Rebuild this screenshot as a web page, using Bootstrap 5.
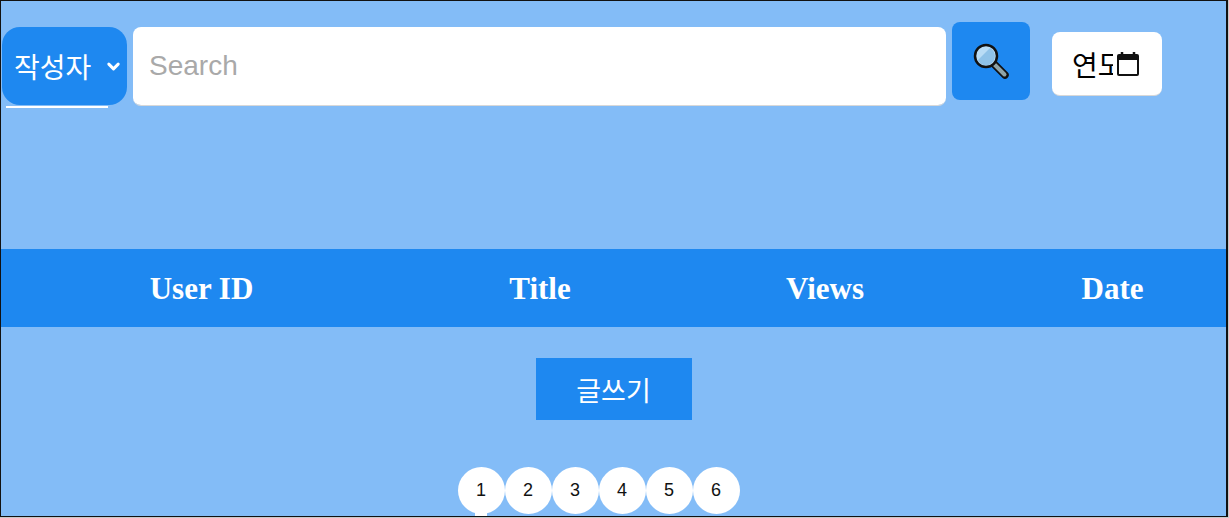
<!DOCTYPE html>
<html lang="ko">

<head>
    <meta charset="UTF-8">
    <meta name="viewport" content="width=device-width, initial-scale=1.0">
    <title>Board</title>
    <link href="https://cdn.jsdelivr.net/npm/bootstrap@5.3.0/dist/css/bootstrap.min.css" rel="stylesheet">
    <style>
        html, body { height: 100%; overflow: hidden; }
        body { background: #c9c9c9; font-family: "Liberation Sans", "Noto Sans CJK KR", sans-serif; }
        .board-frame {
            width: 1228px;
            height: 517px;
            background: #83bcf7;
            border: 1px solid #111;
            border-right-width: 2px;
            overflow: hidden;
        }
        .search-bar { height: 248px; padding: 21px 0 0 1px; }
        .author-wrap { width: 125px; margin-top: 5px; margin-right: 6px; }
        .author-select {
            height: 78px;
            padding: 0 0 0 12px;
            border: 0;
            border-radius: 18px;
            color: #fff;
            font-family: "Noto Sans CJK KR", sans-serif;
            font-size: 28px;
            background-color: #1e88f0;
            background-position: right 6px center;
            background-size: 15px 15px;
            background-image: url("data:image/svg+xml,%3csvg xmlns='http://www.w3.org/2000/svg' viewBox='0 0 16 16'%3e%3cpath fill='none' stroke='%23fff' stroke-linecap='round' stroke-linejoin='round' stroke-width='3.2' d='m3 5.500 5 5 5-5'/%3e%3c/svg%3e");
        }
        .author-line { height: 2px; margin: 1px 19px 0 4px; background: #fff; }
        .search-input {
            width: 813px;
            height: 79px;
            margin-top: 5px;
            padding: 0 16px;
            border: 0;
            border-bottom: 1px solid #d8d8d8;
            border-radius: 8px;
            font-size: 28px;
        }
        .search-input::placeholder { color: #a9a9a9; }
        .search-btn {
            width: 78px;
            height: 78px;
            margin-left: 6px;
            padding: 0;
            border: 0;
            border-radius: 8px;
            background: #1e88f0;
        }
        .date-box {
            width: 110px;
            height: 64px;
            margin-top: 10px;
            margin-left: 22px;
            padding-left: 20px;
            border-bottom: 1px solid #d8d8d8;
            border-radius: 8px;
            background: #fff;
        }
        /* the year text is cut by the calendar icon in the original too */
        .date-text {
            width: 41px;
            margin-right: 3px;
            overflow: hidden;
            white-space: nowrap;
            color: #000;
            font-family: "Noto Sans CJK KR", sans-serif;
            font-size: 28px;
        }
        .board-table { --bs-table-bg: #1e88f0; --bs-table-color: #fff; margin: 0; table-layout: fixed; width: 1226px; }
        .board-table th {
            height: 78px;
            padding: 3px 0 0;
            border: 0;
            vertical-align: middle;
            font-family: "Liberation Serif", serif;
            font-size: 31px;
        }
        .col-user { width: 401px; }
        .col-title { width: 276px; }
        .col-views { width: 294px; }
        .board-table th:last-child { padding-left: 26px; }
        .write-btn {
            width: 156px;
            height: 62px;
            margin-top: 31px;
            border: 0;
            border-radius: 0;
            background: #1e88f0;
            color: #fff;
            font-family: "Noto Sans CJK KR", sans-serif;
            font-size: 27px;
            line-height: 1;
        }
        .pager { margin-top: 47px; margin-right: 30px; }
        .pager-dot {
            position: relative;
            width: 47px;
            height: 47px;
            border-radius: 50%;
            background: #fff;
            color: #111;
            font-size: 18px;
        }
        .pager-dot:first-child::after {
            content: "";
            position: absolute;
            left: 17px;
            bottom: -2px;
            width: 12px;
            height: 3px;
            background: #fff;
        }
    </style>
</head>

<body>
    <div class="board-frame">
        <div class="search-bar d-flex align-items-start">
            <div class="author-wrap">
                <select class="form-select author-select">
                    <option>작성자</option>
                </select>
                <div class="author-line"></div>
            </div>
            <input type="text" class="form-control search-input" placeholder="Search">
            <button type="button" class="btn search-btn d-flex align-items-center justify-content-center">
                <svg width="40" height="40" viewBox="0 0 40 40">
                    <line x1="23" y1="23" x2="34" y2="34" stroke="#111" stroke-width="7.500" stroke-linecap="round"/>
                    <line x1="24" y1="24" x2="33.500" y2="33.500" stroke="#8fa3a6" stroke-width="4" stroke-linecap="round"/>
                    <circle cx="15" cy="15" r="11" fill="#b9dcf5"/>
                    <path d="M7 19 19 7a10 10 0 0 1 5 8 9.500 9.500 0 0 1-9 9.500 9 9 0 0 1-8-5.500z" fill="#8fc2e8"/>
                    <circle cx="15" cy="15" r="11" fill="none" stroke="#111" stroke-width="2.500"/>
                </svg>
            </button>
            <div class="date-box d-flex align-items-center">
                <span class="date-text">연도</span>
                <svg width="24" height="26" viewBox="0 0 24 26">
                    <path d="M6 1v4M18 1v4" stroke="#111" stroke-width="2.500"/>
                    <path d="M3 3h18a2 2 0 0 1 2 2v18a2 2 0 0 1-2 2H3a2 2 0 0 1-2-2V5a2 2 0 0 1 2-2z" fill="#111"/>
                    <rect x="3" y="9" width="18" height="14" fill="#fff"/>
                </svg>
            </div>
        </div>

        <table class="table board-table text-center">
            <colgroup>
                <col class="col-user">
                <col class="col-title">
                <col class="col-views">
                <col>
            </colgroup>
            <thead>
                <tr>
                    <th>User ID</th>
                    <th>Title</th>
                    <th>Views</th>
                    <th>Date</th>
                </tr>
            </thead>
        </table>

        <div class="d-flex justify-content-center">
            <button type="button" class="btn write-btn">글쓰기</button>
        </div>

        <div class="pager d-flex justify-content-center">
            <div class="pager-dot d-flex align-items-center justify-content-center">1</div>
            <div class="pager-dot d-flex align-items-center justify-content-center">2</div>
            <div class="pager-dot d-flex align-items-center justify-content-center">3</div>
            <div class="pager-dot d-flex align-items-center justify-content-center">4</div>
            <div class="pager-dot d-flex align-items-center justify-content-center">5</div>
            <div class="pager-dot d-flex align-items-center justify-content-center">6</div>
        </div>
    </div>

    <script src="https://cdn.jsdelivr.net/npm/bootstrap@5.3.0/dist/js/bootstrap.bundle.min.js"></script>
</body>

</html>
